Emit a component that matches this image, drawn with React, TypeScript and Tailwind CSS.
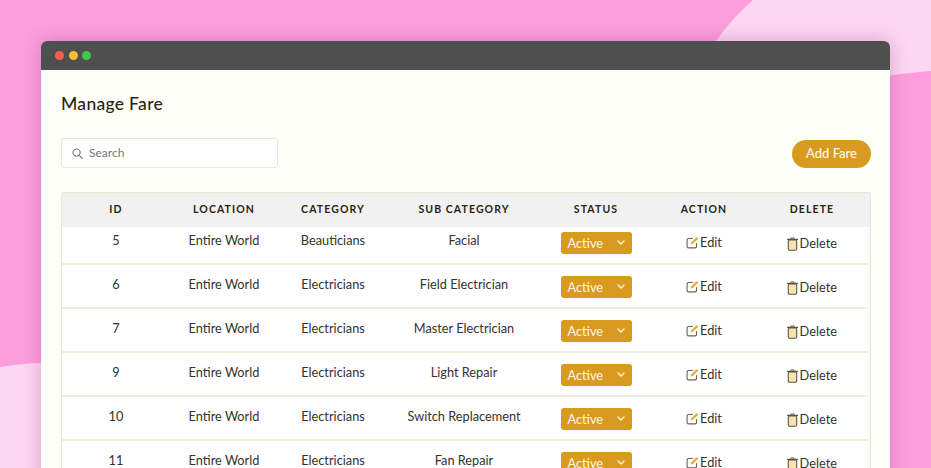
const rows = [
  { id: 5, category: "Beauticians", sub: "Facial" },
  { id: 6, category: "Electricians", sub: "Field Electrician" },
  { id: 7, category: "Electricians", sub: "Master Electrician" },
  { id: 9, category: "Electricians", sub: "Light Repair" },
  { id: 10, category: "Electricians", sub: "Switch Replacement" },
  { id: 11, category: "Electricians", sub: "Fan Repair" },
];

const headers = ["ID", "LOCATION", "CATEGORY", "SUB CATEGORY", "STATUS", "ACTION", "DELETE"];

const cols = "grid grid-cols-[108px_108px_110px_152px_112px_104px_112px]";

function EditIcon() {
  return (
    <svg width="13" height="13" viewBox="0 0 13 13" fill="none" className="shrink-0">
      <path d="M6.5 2.5H2.4a1.3 1.3 0 0 0-1.3 1.3v6.8a1.3 1.3 0 0 0 1.3 1.3h6.8a1.3 1.3 0 0 0 1.3-1.3V7.5" stroke="#67635a" strokeWidth="1.1" strokeLinecap="round" />
      <path d="M4.6 8.6l.5-2.2L10.4 1l1.8 1.8-5.4 5.3z" fill="#e8ae3a" />
    </svg>
  );
}

function TrashIcon() {
  return (
    <svg width="11" height="14" viewBox="0 0 11 14" fill="none" className="shrink-0">
      <path d="M3.8 1.7V1h3.4v.7" stroke="#5a564d" strokeWidth="1" />
      <path d="M.5 2.4h10" stroke="#5a564d" strokeWidth="1.3" strokeLinecap="round" />
      <rect x="1.3" y="3" width="8.4" height="10.3" rx="1.2" fill="#fbe3ae" stroke="#5a564d" strokeWidth="1.1" />
    </svg>
  );
}

function SearchIcon() {
  return (
    <svg width="11" height="11" viewBox="0 0 11 11" fill="none" className="shrink-0">
      <circle cx="4.6" cy="4.6" r="3.6" stroke="#77756f" strokeWidth="1.1" />
      <path d="M7.3 7.3l3 3" stroke="#77756f" strokeWidth="1.1" strokeLinecap="round" />
    </svg>
  );
}

export default function App() {
  return (
    <div className="relative h-[468px] w-[931px] overflow-hidden bg-[#fd9ddc] pt-[41px] pl-[41px] font-['Lato','Noto_Sans',sans-serif]">
      {/* background curves */}
      <svg className="absolute inset-0" width="931" height="468" viewBox="0 0 931 468">
        <path d="M716 41C727 26 740 11 753 0H931V71C905 73 885 76 860 80L700 60z" fill="#fdd6f3" />
        <path d="M0 367C14 365 30 363 41 363V468H0z" fill="#fdd6f3" />
      </svg>

      <div className="relative h-[500px] w-[849px] rounded-t-[6px] bg-[#fffffa] shadow-[0_0_18px_rgba(150,60,130,0.35)]">
        {/* title bar */}
        <div className="flex h-[29px] items-center gap-[4.5px] rounded-t-[6px] bg-[#4e4f4e] pl-[14px]">
          <span className="h-[9px] w-[9px] rounded-full bg-[#f6604f]" />
          <span className="h-[9px] w-[9px] rounded-full bg-[#f9bd3a]" />
          <span className="h-[9px] w-[9px] rounded-full bg-[#43c746]" />
        </div>

        <div className="pr-[19px] pl-[20px]">
          <h1 className="mt-[23px] text-[17.5px] leading-[22px] font-medium tracking-[0.3px] text-[#2a2318]">Manage Fare</h1>

          <div className="mt-[23px] flex items-center justify-between">
            <div className="flex h-[30px] w-[217px] items-center gap-[6px] rounded-[3px] border border-[#e8e7d8] bg-white pl-[10px]">
              <SearchIcon />
              <span className="text-[12px] text-[#77756f]">Search</span>
            </div>
            <button className="mt-[2px] h-[28px] w-[79px] rounded-full bg-[#d99a20] text-[13px] font-medium text-[#fff8e8]">
              Add Fare
            </button>
          </div>

          <div className="mt-[24px] rounded-[2px] border border-[#e8e7d8] bg-[#fbfaf2]">
            <div className={`${cols} h-[34px] items-center bg-[#f1f1f1]`}>
              {headers.map((h) => (
                <div key={h} className="text-center text-[10.5px] font-bold tracking-[1.1px] text-[#2a2318]">
                  {h}
                </div>
              ))}
            </div>
            <div className="w-[806px]">
              {rows.map((r) => (
                <div key={r.id} className={`${cols} h-[44px] items-start border-b-2 border-[#eeeee0] bg-white pt-[12px] text-center text-[12.75px] text-[#35322c] first:h-[38px] first:pt-[6px]`}>
                  <div className="leading-[15px]">{r.id}</div>
                  <div className="leading-[15px]">Entire World</div>
                  <div className="leading-[15px]">{r.category}</div>
                  <div className="leading-[15px]">{r.sub}</div>
                  <div className="flex justify-center">
                    <div className="-mt-[1px] flex h-[22px] w-[71px] items-center justify-between rounded-[3px] bg-[#d99a20] px-[7px] pt-[1px] text-[12.75px] text-[#fff8e8]">
                      Active
                      <svg width="8" height="5" viewBox="0 0 8 5" fill="none" className="-mt-[2px]">
                        <path d="M1 1l3 3 3-3" stroke="#fff8e8" strokeWidth="1.3" strokeLinecap="round" strokeLinejoin="round" />
                      </svg>
                    </div>
                  </div>
                  <div className="flex items-center justify-center gap-[1px] pt-[2px] leading-[15px]">
                    <EditIcon />
                    Edit
                  </div>
                  <div className="flex items-center justify-center gap-[1.5px] pt-[3px] leading-[15px]">
                    <TrashIcon />
                    Delete
                  </div>
                </div>
              ))}
            </div>
          </div>
        </div>
      </div>
    </div>
  );
}
